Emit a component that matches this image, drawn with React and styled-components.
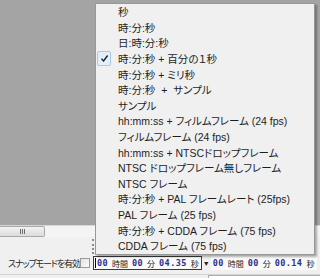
import styled, { createGlobalStyle } from "styled-components"

const GlobalStyle = createGlobalStyle`
    html, body {
        margin: 0;
        padding: 0;
        background: #f0f0f0;
    }
    body {
        font-family: "Liberation Sans", "Noto Sans CJK JP", sans-serif;
        font-feature-settings: "palt";
    }
`

const Screen = styled.div`
    position: relative;
    width: 320px;
    height: 278px;
    overflow: hidden;
    display: flex;
    flex-direction: column;
    background: #f0f0f0;
`
const Canvas = styled.div`
    height: 225px;
    background: #a4a4a4;
`
const ScrollBar = styled.div`
    height: 11px;
    display: flex;
    background: #f4f4f4;
    border-top: 1px solid #d6d6d6;
`
const Thumb = styled.div`
    width: 44px;
    background: linear-gradient(#f2f2f2, #dcdcdc);
    border: 1px solid #a8a8a8;
    border-left: none;
    border-radius: 0 2px 2px 0;
    display: flex;
    align-items: center;
    justify-content: center;
    gap: 1px;
`
const GripLine = styled.span`
    width: 1px;
    height: 5px;
    background: #6c6c6c;
`
const Toolbar = styled.div`
    flex: 1;
    display: flex;
    flex-direction: column;
    background: #f0f0f0;
`
const GripRow = styled.div`
    height: 19px;
    padding: 2px 0 0 92px;
    box-sizing: border-box;
`
const Grip = styled.div`
    width: 0;
    height: 15px;
    border-left: 2px dotted #8a8a8a;
`
const Controls = styled.div`
    height: 14px;
    display: flex;
    align-items: center;
    padding-left: 8px;
    font-size: 10px;
    color: #1e1e1e;
    white-space: nowrap;
`
const Label = styled.span`
    flex: 0 0 72px;
    font-size: 9px;
    letter-spacing: -1.1px;
`
const Check = styled.span`
    flex: 0 0 auto;
    width: 8px;
    height: 8px;
    border: 1px solid #9a9a9a;
    background: linear-gradient(135deg, #e2e2e2, #fbfbfb);
    margin-right: 3px;
`
const TimeField = styled.div`
    flex: 0 0 auto;
    height: 12px;
    display: flex;
    align-items: center;
    gap: 4px;
    padding: 0 2px 0 1px;
    background: #fafafa;
    border: 1px solid ${(props) => (props.active ? "#3a3a3a" : "transparent")};
    font-size: 8px;
`
const Digits = styled.span`
    color: #2e2e8e;
    letter-spacing: 0.4px;
    font-family: "DejaVu Sans Mono", monospace;
    font-size: 8.5px;
    font-weight: bold;
`
const Caret = styled.span`
    display: inline-block;
    width: 1px;
    height: 10px;
    vertical-align: middle;
    background: #000;
    margin-right: 1px;
`
const Unit = styled.span`
    color: #222;
`
const Arrow = styled.span`
    flex: 0 0 7px;
    display: flex;
    justify-content: center;
    font-size: 7px;
    color: #222;
    margin: 0 1px;
`
const Footer = styled.div`
    flex: 1;
    margin-top: 4px;
    border-top: 1px solid #d2d2d2;
    display: flex;
    padding-left: 208px;
`
const FooterBox = styled.div`
    flex: 1;
    background: #ffffff;
    border-left: 1px solid #b0b0b0;
    border-top: 1px solid #b0b0b0;
`

const Menu = styled.ul`
    position: absolute;
    left: 95px;
    top: 3px;
    width: 218px;
    margin: 0;
    padding: 0;
    list-style: none;
    background: #f0f0f0;
    border: 1px solid #979797;
    box-shadow: 2px 2px 2px rgba(0, 0, 0, 0.3);
`
const Item = styled.li`
    position: relative;
    height: 15.6px;
    display: flex;
    align-items: center;
    padding-left: 22px;
    font-size: 10.5px;
    color: #1e1e1e;
    white-space: pre;
`
const CheckBox = styled.span`
    position: absolute;
    left: 1px;
    top: 0;
    width: 14px;
    height: 15px;
    box-sizing: border-box;
    background: #e3eef9;
    border: 1px solid #a9c9e8;
    border-radius: 2px;
    display: flex;
    align-items: center;
    justify-content: center;
`

const items = [
    "秒",
    "時:分:秒",
    "日:時:分:秒",
    "時:分:秒 + 百分の１秒",
    "時:分:秒 + ミリ秒",
    "時:分:秒  +  サンプル",
    "サンプル",
    "hh:mm:ss + フィルムフレーム (24 fps)",
    "フィルムフレーム (24 fps)",
    "hh:mm:ss + NTSCドロップフレーム",
    "NTSC ドロップフレーム無しフレーム",
    "NTSC フレーム",
    "時:分:秒 + PAL フレームレート (25fps)",
    "PAL フレーム (25 fps)",
    "時:分:秒 + CDDA フレーム (75 fps)",
    "CDDA フレーム (75 fps)",
]

function App() {
    return (
        <Screen>
            <GlobalStyle />
            <Canvas />
            <ScrollBar>
                <Thumb>
                    <GripLine />
                    <GripLine />
                    <GripLine />
                </Thumb>
            </ScrollBar>
            <Toolbar>
                <GripRow>
                    <Grip />
                </GripRow>
                <Controls>
                    <Label>スナップモードを有効</Label>
                    <Check />
                    <TimeField active>
                        <Digits>
                            <Caret />
                            00
                        </Digits>
                        <Unit>時間</Unit>
                        <Digits>00</Digits>
                        <Unit>分</Unit>
                        <Digits>04.35</Digits>
                        <Unit>秒</Unit>
                    </TimeField>
                    <Arrow>▼</Arrow>
                    <TimeField>
                        <Digits>00</Digits>
                        <Unit>時間</Unit>
                        <Digits>00</Digits>
                        <Unit>分</Unit>
                        <Digits>00.14</Digits>
                        <Unit>秒</Unit>
                    </TimeField>
                </Controls>
                <Footer>
                    <FooterBox />
                </Footer>
            </Toolbar>
            <Menu>
                {items.map((text, index) => (
                    <Item key={`fmt-${index}`}>
                        {index === 3 && (
                            <CheckBox>
                                <svg width="9" height="9" viewBox="0 0 9 9">
                                    <path
                                        d="M1.5 4.8 L3.6 7 L7.6 1.5"
                                        fill="none"
                                        stroke="#1a1a1a"
                                        strokeWidth="1.3"
                                    />
                                </svg>
                            </CheckBox>
                        )}
                        {text}
                    </Item>
                ))}
            </Menu>
        </Screen>
    )
}

export default App
